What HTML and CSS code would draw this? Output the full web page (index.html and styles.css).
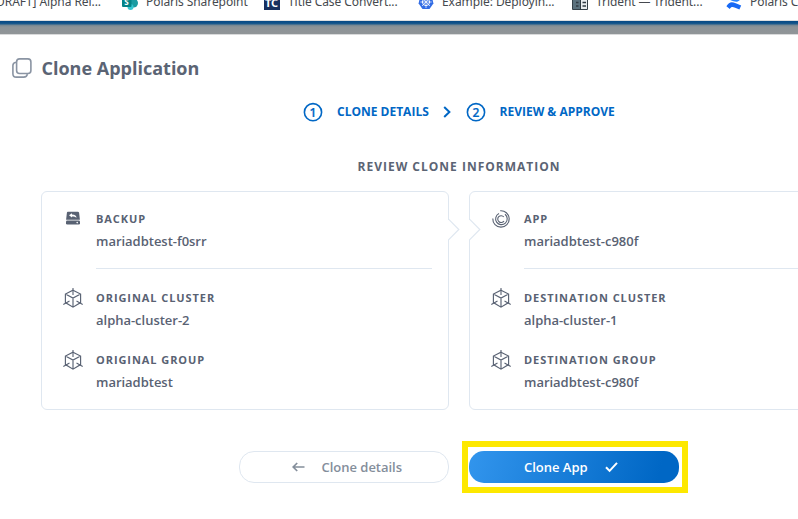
FILE: index.html
```html
<!DOCTYPE html>
<html lang="en">
<head>
<meta charset="utf-8">
<title>Clone Application</title>
<link rel="stylesheet" href="styles.css">
</head>
<body>
<svg class="defs" aria-hidden="true">
  <symbol id="cube" viewBox="0 0 20 20">
    <path d="M10 2.2 17.6 6v8.6L10 19.2 2.4 14.6V6zM2.4 6 10 10l7.6-4M10 10v9" fill="none" stroke="currentColor" stroke-width="1.15"/>
    <path d="M10 0v7M.3 16.4 6.5 13M19.7 16.4 13.5 13" fill="none" stroke="currentColor" stroke-width="1.1"/>
  </symbol>
  <symbol id="notch" viewBox="0 0 13 24">
    <path d="M1 2h1v19.5H1z" fill="#fff"/>
    <path d="M1.5 1.2 11.8 11.5 1.5 21.8" fill="none" stroke="#dfe7f0" stroke-width="1.2"/>
  </symbol>
</svg>
<nav class="bookmarks">
  <div class="bookmark first"><span>[DRAFT] Alpha Rel...</span></div>
  <div class="bookmark second">
    <svg width="16" height="16" viewBox="0 0 16 16"><circle cx="8" cy="5" r="5" fill="#036c70"/><circle cx="11.5" cy="9" r="4.5" fill="#1a9ba1"/><circle cx="8.5" cy="13" r="3" fill="#37c6d0"/><rect y="4" width="9.5" height="9" rx="1" fill="#038387"/><text x="2.2" y="11.3" class="mark">S</text></svg>
    <span>Polaris Sharepoint</span>
  </div>
  <div class="bookmark">
    <svg width="16" height="16" viewBox="0 0 16 16"><rect width="16" height="16" fill="#17305f"/><text x="1" y="12.5" class="mark tc">TC</text></svg>
    <span>Title Case Convert...</span>
  </div>
  <div class="bookmark">
    <svg width="16" height="16" viewBox="0 0 16 16"><path d="M8 0 14 3 15.4 9.5 11.5 15H4.5L.6 9.5 2 3z" fill="#326ce5"/><g fill="none" stroke="#fff"><circle cx="8" cy="8" r="3.6"/><path d="M8 2v12M2.3 8h11.4M4 4l8 8M12 4l-8 8" stroke-width=".7"/></g></svg>
    <span>Example: Deployin...</span>
  </div>
  <div class="bookmark">
    <svg width="16" height="16" viewBox="0 0 16 16"><path d="M.5.5h15v15H.5z" fill="#e9edef" stroke="#364149"/><path d="M1 1h7v14H1z" fill="#5c727e"/><path d="M8.5 1v15" stroke="#303b43"/><path d="M10.5 8.5h3.5M10.5 12h3.5M4 8.5h2.5M4 12h2.5" stroke="#303b43" stroke-width="1.4"/></svg>
    <span>Trident — Trident...</span>
  </div>
  <div class="bookmark last">
    <svg width="16" height="16" viewBox="0 0 16 16"><path d="M.4 12.2C4 6.5 6.8 7.6 15.2 11.6L13.4 15.6C7 12.6 5.6 12 3.8 15z" fill="#1769f5"/><path d="M15.4 3.8C12 9.5 9.2 8.4.8 4.4L2.6.4C9 3.4 10.4 4 12.2 1z" fill="#2684ff"/></svg>
    <span>Polaris Confluence</span>
  </div>
</nav>
<div class="backdrop"></div>
<main>
  <h1>
    <svg width="20" height="20" viewBox="0 0 20 20" fill="none" stroke="#8a94a3" stroke-width="1.6"><rect x="4.6" y=".9" width="14.3" height="14.6" rx="3"/><path d="M4.2 4.2C1.8 4.4.9 5.3.9 7.5v8.2c0 2.3 1.2 3.4 3.4 3.4h7.4c2.2 0 3.3-.8 3.7-3"/></svg>
    <span>Clone Application</span>
  </h1>
  <ol class="steps">
    <li><svg width="20" height="20" viewBox="0 0 20 20"><circle cx="10" cy="10.2" r="8.6" class="ring"/><text x="10" y="14.5" class="num">1</text></svg><span class="step-one">CLONE DETAILS</span></li>
    <li class="sep"><svg width="8" height="12" viewBox="0 0 8 12"><path d="m1.2 1 5.2 5-5.2 5" fill="none" stroke="#0067c5" stroke-width="2"/></svg></li>
    <li><svg width="20" height="20" viewBox="0 0 20 20"><circle cx="10" cy="10.2" r="8.6" class="ring"/><text x="10" y="14.5" class="num">2</text></svg><span>REVIEW &amp; APPROVE</span></li>
  </ol>
  <h2>REVIEW CLONE INFORMATION</h2>
  <div class="cards">
    <section class="card">
      <svg class="notch right" width="13" height="24"><use href="#notch"/></svg>
      <div class="row lead">
        <svg class="icon" width="20" height="20" viewBox="0 0 20 20"><path d="M5.2 2.8h9.6c.7 0 1.1.4 1.3 1l.8 7H3.1l.8-7c.1-.6.6-1 1.3-1z" fill="#596273"/><path d="M6 6.2 9 4.2v1.2c3 0 4.5 1.3 4.5 3.3C12.3 7.6 11.4 7.4 9 7.4v1.1z" fill="#fff"/><rect x="3" y="11.6" width="14" height="4" rx="1.3" fill="#596273"/><circle cx="14.2" cy="13.6" r=".8" fill="#fff"/></svg>
        <div><h3>BACKUP</h3><p>mariadbtest-f0srr</p></div>
      </div>
      <div class="row"><svg class="icon" width="20" height="20"><use href="#cube"/></svg><div><h3>ORIGINAL CLUSTER</h3><p>alpha-cluster-2</p></div></div>
      <div class="row"><svg class="icon" width="20" height="20"><use href="#cube"/></svg><div><h3>ORIGINAL GROUP</h3><p>mariadbtest</p></div></div>
    </section>
    <section class="card">
      <svg class="notch left" width="13" height="24"><use href="#notch"/></svg>
      <div class="row lead">
        <svg class="icon" width="20" height="20" viewBox="0 0 20 20" fill="none" stroke="#596273" stroke-width="1.1"><path d="M9.2 1.8A8.2 8.2 0 1 1 1.8 9.5"/><path d="M14 5.3A5.8 5.8 0 1 1 8 4.6"/><path d="M13 12A3.4 3.4 0 1 1 12.8 8"/></svg>
        <div><h3>APP</h3><p>mariadbtest-c980f</p></div>
      </div>
      <div class="row"><svg class="icon" width="20" height="20"><use href="#cube"/></svg><div><h3>DESTINATION CLUSTER</h3><p>alpha-cluster-1</p></div></div>
      <div class="row"><svg class="icon" width="20" height="20"><use href="#cube"/></svg><div><h3>DESTINATION GROUP</h3><p>mariadbtest-c980f</p></div></div>
    </section>
  </div>
  <div class="actions">
    <button class="back"><svg width="13" height="10" viewBox="0 0 13 10"><path d="M12.5 5H1.5M5.2 1 1.2 5l4 4" fill="none" stroke="#848e9b" stroke-width="1.7"/></svg><span>Clone details</span></button>
    <div class="highlight"><button class="primary"><span>Clone App</span><svg width="13" height="11" viewBox="0 0 13 11"><path d="m1 5.2 3.6 3.7L12 .8" fill="none" stroke="#fff" stroke-width="2"/></svg></button></div>
  </div>
</main>
</body>
</html>
```
FILE: styles.css
```css
* { box-sizing: border-box; }
html { overflow: hidden; }
body { margin: 0; width: 798px; height: 519px; overflow: hidden; background: #fff; color: #5b6474; font-family: "Open Sans", "Noto Sans", sans-serif; }
main { overflow: hidden; }
h1, h2, h3, p, ol { margin: 0; padding: 0; }
svg { flex: none; display: block; }
.defs { display: none; }
.bookmarks { display: flex; height: 20px; overflow: hidden; }
.bookmark { flex: none; display: flex; align-items: flex-start; gap: 8px; width: 154px; height: 16px; margin-top: -6px; font: 12px/16px "Noto Sans", sans-serif; letter-spacing: -0.07px; color: #45494e; white-space: nowrap; }
.bookmark.first { width: 101px; margin-right: 21px; justify-content: flex-end; }
.bookmark.second { width: 142px; }
.bookmark.last { width: 72px; overflow: hidden; }
.mark { font: bold 8px "Noto Sans", sans-serif; fill: #fff; }
.mark.tc { font-size: 11px; }
.backdrop { height: 15px; border-top: 1px solid #dedfe0; border-bottom: 1px solid #d9dadb; background: linear-gradient(#084b86 0 1px, #1d5b8d 3px, #718491 4px, #8d9397 6px, #909598 100%); }
h1 { display: flex; align-items: center; height: 24px; margin: 21px 0 0 11.5px; gap: 10px; font-size: 18px; line-height: 24px; font-weight: 700; white-space: nowrap; }
.steps { display: flex; align-items: center; list-style: none; height: 20px; margin: 22px 0 0 303px; color: #0067c5; font-size: 12px; line-height: 20px; font-weight: 700; white-space: nowrap; }
.steps li { display: flex; align-items: center; gap: 14px; }
.ring { fill: none; stroke: #0067c5; stroke-width: 1.6; }
.num { font: 600 12px "Open Sans", sans-serif; fill: #0067c5; stroke: #0067c5; stroke-width: .2; text-anchor: middle; }
.step-one { width: 92px; }
.steps .sep { margin: 0 15px 0 13.5px; }
h2 { margin: 35px 0 0 357.5px; font-size: 12px; line-height: 20px; letter-spacing: 1px; white-space: nowrap; }
.cards { display: flex; gap: 20px; margin: 14px 0 0 41px; }
.card { position: relative; flex: none; width: 408px; height: 219px; padding: 17px 16px 0 21px; border: 1px solid #dfe7f0; border-radius: 6px; }
.notch { position: absolute; top: 26px; }
.notch.right { right: -12px; }
.notch.left { left: -2px; }
.row { display: flex; gap: 13px; height: 62px; color: #596273; }
.row > div { flex: 1; }
.row.lead { height: 79px; }
.row.lead > div { height: 60px; border-bottom: 1px solid #dfe7f0; }
h3 { font-size: 11px; line-height: 20px; letter-spacing: 0.93px; font-weight: 700; }
p { font-size: 13px; line-height: 20px; padding-top: 2px; letter-spacing: -0.02px; font-weight: 600; }
.actions { display: flex; align-items: center; gap: 13px; margin: 31px 0 0 239px; }
button { width: 210px; height: 32px; border-radius: 15px; display: flex; align-items: center; padding: 0; font: 600 13px/20px "Open Sans", sans-serif; letter-spacing: -0.02px; white-space: nowrap; }
.back { border: 1px solid #dfe7f0; background: #fff; color: #848e9b; gap: 17px; padding-left: 51.5px; }
.highlight { width: 226px; height: 52px; padding: 4px 1px; border: 6px solid #fde800; display: flex; }
.primary { border: 0; color: #fff; background: linear-gradient(105deg, #3295ed, #0067c5 90%); gap: 17px; padding-left: 55px; }
```
